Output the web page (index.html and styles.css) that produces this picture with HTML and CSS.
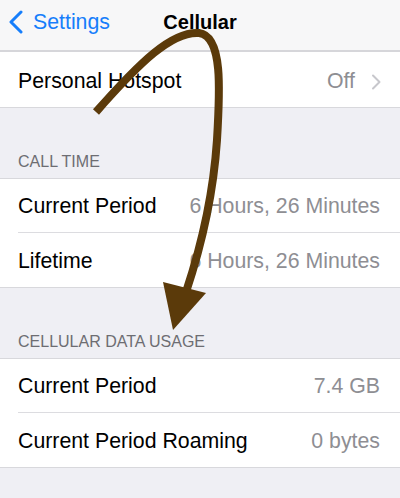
FILE: index.html
```html
<!DOCTYPE html>
<html>
<head>
<meta charset="utf-8">
<link rel="stylesheet" href="styles.css">
</head>
<body>
<div class="screen">
  <header class="nav">
    <div class="back">
      <svg class="back-chev" width="16" height="24" viewBox="0 0 16 24"><path d="M13 2 L3 12 L13 22" fill="none" stroke="#167efb" stroke-width="3" stroke-linecap="round" stroke-linejoin="round"/></svg>
      <span class="back-label">Settings</span>
    </div>
    <div class="title">Cellular</div>
  </header>

  <section class="group first">
    <div class="row">
      <span class="label">Personal Hotspot</span>
      <span class="value">Off<svg class="chev" width="10" height="16" viewBox="0 0 10 16"><path d="M2 1.5 L8.5 8 L2 14.5" fill="none" stroke="#c7c7cc" stroke-width="2" stroke-linecap="round" stroke-linejoin="round"/></svg></span>
    </div>
  </section>

  <div class="section-header">CALL TIME</div>
  <section class="group">
    <div class="row">
      <span class="label">Current Period</span>
      <span class="value">6 Hours, 26 Minutes</span>
    </div>
    <div class="row">
      <span class="label">Lifetime</span>
      <span class="value">6 Hours, 26 Minutes</span>
    </div>
  </section>

  <div class="section-header">CELLULAR DATA USAGE</div>
  <section class="group">
    <div class="row">
      <span class="label">Current Period</span>
      <span class="value">7.4 GB</span>
    </div>
    <div class="row">
      <span class="label">Current Period Roaming</span>
      <span class="value">0 bytes</span>
    </div>
  </section>

  <svg class="arrow" width="400" height="498" viewBox="0 0 400 498">
    <path d="M96 112 C140 62 172 31 199 33 C223 36 220 90 217 140 C213 200 200 250 186 292" fill="none" stroke="#5b3a0a" stroke-width="8" stroke-linecap="butt"/>
    <polygon points="163,282 206,293 173,330" fill="#5b3a0a"/>
  </svg>
</div>
</body>
</html>
```

FILE: styles.css
```css
* { box-sizing: border-box; }
html, body {
  margin: 0;
  padding: 0;
}
body {
  width: 400px;
  height: 498px;
  overflow: hidden;
  background: #efeff4;
  font-family: "Liberation Sans", Arial, sans-serif;
}
.screen {
  position: relative;
  width: 400px;
  height: 498px;
  background: #efeff4;
}
.nav {
  position: relative;
  height: 52px;
  background: #f7f7f8;
  border-bottom: 2px solid #d6d6da;
  display: flex;
  align-items: flex-start;
  padding-top: 10px;
}
.back {
  display: flex;
  align-items: center;
  padding-left: 8px;
  gap: 9px;
  color: #167efb;
  font-size: 21.3px;
  line-height: 24px;
}
.back-chev { display: block; }
.title {
  position: absolute;
  left: 0;
  right: 0;
  top: 10px;
  text-align: center;
  font-weight: bold;
  font-size: 20px;
  line-height: 24px;
  color: #000;
  pointer-events: none;
}
.group {
  background: #fff;
  border-top: 1px solid #d8d8dc;
  border-bottom: 1px solid #d8d8dc;
}
.group.first { border-top: none; }
.row {
  height: 53px;
  margin-left: 18px;
  padding-right: 20px;
  padding-top: 2px;
  display: flex;
  align-items: center;
  justify-content: space-between;
  font-size: 21.3px;
  color: #000;
}
.row + .row {
  border-top: 1px solid #dcdce0;
  height: 55px;
}
.first .row { height: 55px; padding-top: 4px; }
.value {
  color: #8e8e93;
  display: flex;
  align-items: center;
}
.chev {
  margin-left: 16px;
  margin-right: -1px;
  display: block;
}
.section-header {
  height: 70px;
  padding: 45px 18px 0;
  font-size: 16px;
  line-height: 18px;
  color: #6d6d72;
}
.arrow {
  position: absolute;
  left: 0;
  top: 0;
  pointer-events: none;
}
```
